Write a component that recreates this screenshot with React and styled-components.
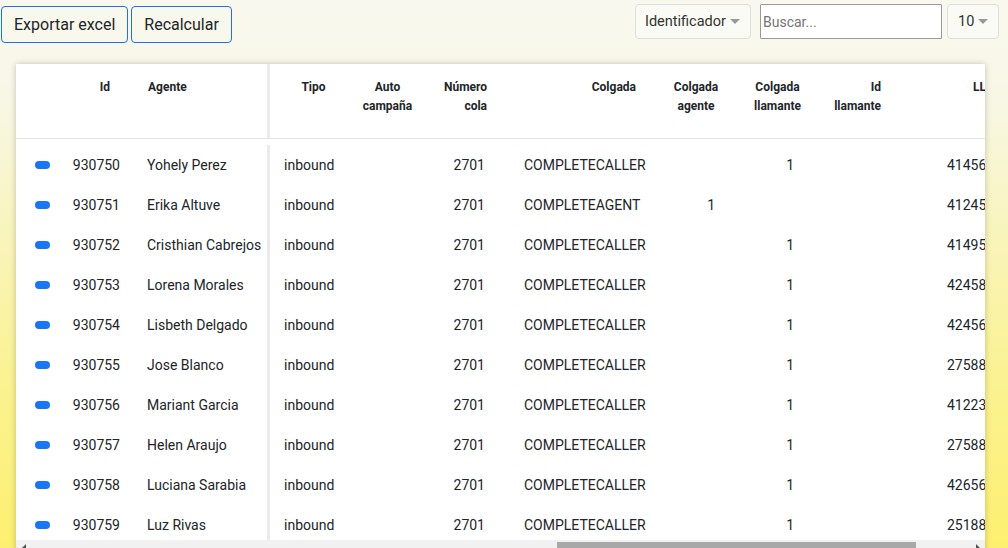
import React from "react";
import styled, { createGlobalStyle } from "styled-components";

const GlobalStyle = createGlobalStyle`
  html, body {
    margin: 0;
    height: 548px;
    overflow: hidden;
  }
  body {
    font-family: Roboto, "Liberation Sans", sans-serif;
    color: #212529;
    background: linear-gradient(
      180deg,
      #f8f8ef 0%,
      #f8f7e6 18%,
      #f9f4b8 45%,
      #fbf291 70%,
      #fdf070 100%
    );
  }
`;

const Page = styled.div`
  display: flex;
  flex-direction: column;
  height: 548px;
`;

const Toolbar = styled.div`
  height: 64px;
  flex-shrink: 0;
  display: flex;
  justify-content: space-between;
  align-items: flex-start;
  padding: 0 9px 0 1px;
  box-sizing: border-box;
`;

const Group = styled.div`
  display: flex;
  align-items: center;
  gap: ${({ $gap }) => $gap}px;
  padding-top: ${({ $top }) => $top}px;
`;

const OutlineButton = styled.button`
  height: 37px;
  padding: 0 12px;
  border: 1px solid #1a73e8;
  border-radius: 4px;
  background: transparent;
  font-family: Roboto, "Liberation Sans", sans-serif;
  font-size: 16px;
  color: #212529;
`;

const Select = styled.div`
  height: 35px;
  box-sizing: border-box;
  width: ${({ $w }) => $w}px;
  padding: 0 10px 0 ${({ $pl }) => $pl}px;
  display: flex;
  align-items: center;
  justify-content: space-between;
  border: 1px solid #dedede;
  border-radius: 4px;
  background: #fbfbf6;
  font-size: 14.5px;
  color: #333;
`;

const Caret = styled.span`
  width: 0;
  height: 0;
  border-left: 5px solid transparent;
  border-right: 5px solid transparent;
  border-top: 5px solid #999;
`;

const Search = styled.input`
  width: 182px;
  height: 35px;
  box-sizing: border-box;
  margin: 0 5px 0 9px;
  border: 1px solid #9a9a9a;
  border-radius: 1px;
  padding: 0 2px;
  font-family: Roboto, "Liberation Sans", sans-serif;
  font-size: 14px;
  background: #fff;
  &::placeholder {
    color: #757575;
  }
`;

const Card = styled.div`
  height: 491px;
  margin: 0 23px 0 16px;
  background: #fff;
  box-shadow: 0 0 6px rgba(0, 0, 0, 0.22);
  display: flex;
  flex-direction: column;
  overflow: hidden;
  flex-shrink: 0;
`;

const TableArea = styled.div`
  flex: 1;
  overflow: hidden;
`;

const colWidths = [46, 73, 135, 80, 75, 75, 150, 90, 75, 80, 200];
const gridCols = colWidths.map((w) => `${w}px`).join(" ");

const HeadRow = styled.div`
  display: grid;
  grid-template-columns: ${gridCols};
  height: 74px;
  border-bottom: 1px solid #e2e2e2;
  width: max-content;
`;

const Body = styled.div`
  padding-top: 6px;
  width: max-content;
`;

const Row = styled.div`
  display: grid;
  grid-template-columns: ${gridCols};
  height: 40px;
  align-items: center;
`;

const HeadCell = styled.div`
  box-sizing: border-box;
  height: 100%;
  padding: 14px ${({ $pr }) => $pr ?? 12}px 0 ${({ $pl }) => $pl ?? 12}px;
  text-align: ${({ $align }) => $align || "left"};
  font-size: 12px;
  font-weight: 700;
  line-height: 19px;
  color: #212529;
  white-space: nowrap;
  overflow: hidden;
  ${({ $divider }) => $divider && "border-right: 3px solid #ebebeb;"}
`;

const Cell = styled.div`
  box-sizing: border-box;
  height: 100%;
  display: flex;
  align-items: center;
  justify-content: ${({ $align }) =>
    $align === "right" ? "flex-end" : "flex-start"};
  padding: 0 ${({ $pr }) => $pr ?? 12}px 0 ${({ $pl }) => $pl ?? 12}px;
  font-size: 14px;
  color: #212529;
  white-space: nowrap;
  overflow: hidden;
  ${({ $divider }) => $divider && "border-right: 3px solid #ebebeb;"}
`;

const Pill = styled.span`
  width: 18px;
  height: 8px;
  border-radius: 4px;
  background: #1877f2;
`;

const ScrollBar = styled.div`
  height: 15px;
  flex-shrink: 0;
  display: flex;
  background: #f1f1f1;
`;

const Arrow = styled.div`
  width: 15px;
  display: flex;
  align-items: center;
  justify-content: center;
  &::after {
    content: "";
    border-top: 4px solid transparent;
    border-bottom: 4px solid transparent;
    ${({ $dir }) =>
      $dir === "left"
        ? "border-right: 4px solid #505050;"
        : "border-left: 4px solid #505050;"}
  }
`;

const Track = styled.div`
  flex: 1;
  padding: 2px 0;
  box-sizing: border-box;
`;

const Thumb = styled.div`
  height: 100%;
  background: #a8a8a8;
`;

const rows = [
  ["930750", "Yohely Perez", "COMPLETECALLER", "", "1", "4145623871"],
  ["930751", "Erika Altuve", "COMPLETEAGENT", "1", "", "4124530912"],
  ["930752", "Cristhian Cabrejos", "COMPLETECALLER", "", "1", "4149527730"],
  ["930753", "Lorena Morales", "COMPLETECALLER", "", "1", "4245811920"],
  ["930754", "Lisbeth Delgado", "COMPLETECALLER", "", "1", "4245639021"],
  ["930755", "Jose Blanco", "COMPLETECALLER", "", "1", "2758841102"],
  ["930756", "Mariant Garcia", "COMPLETECALLER", "", "1", "4122390158"],
  ["930757", "Helen Araujo", "COMPLETECALLER", "", "1", "2758821437"],
  ["930758", "Luciana Sarabia", "COMPLETECALLER", "", "1", "4265670214"],
  ["930759", "Luz Rivas", "COMPLETECALLER", "", "1", "2518839920"],
];

const App = () => {
  return (
    <Page>
      <GlobalStyle />
      <Toolbar>
        <Group $gap={3} $top={6}>
          <OutlineButton>Exportar excel</OutlineButton>
          <OutlineButton>Recalcular</OutlineButton>
        </Group>
        <Group $gap={0} $top={4}>
          <Select $w={116} $pl={9}>
            Identificador
            <Caret />
          </Select>
          <Search placeholder="Buscar..." />
          <Select $w={52} $pl={10}>
            10
            <Caret />
          </Select>
        </Group>
      </Toolbar>
      <Card>
        <TableArea>
          <HeadRow>
            <HeadCell />
            <HeadCell $align="right" $pr={25}>Id</HeadCell>
            <HeadCell $pl={13} $divider>Agente</HeadCell>
            <HeadCell $align="center" $pl={10} $pr={3}>Tipo</HeadCell>
            <HeadCell $align="center" $pl={0} $pr={0}>
              Auto
              <br />
              campaña
            </HeadCell>
            <HeadCell $align="right" $pr={13}>
              Número
              <br />
              cola
            </HeadCell>
            <HeadCell $align="right" $pr={14}>Colgada</HeadCell>
            <HeadCell $align="center" $pl={2} $pr={0}>
              Colgada
              <br />
              agente
            </HeadCell>
            <HeadCell $align="center" $pl={0} $pr={0}>
              Colgada
              <br />
              llamante
            </HeadCell>
            <HeadCell $align="right" $pr={14}>
              Id
              <br />
              llamante
            </HeadCell>
            <HeadCell $pl={78}>LLamada</HeadCell>
          </HeadRow>
          <Body>
            {rows.map((r) => (
              <Row key={r[0]}>
                <Cell $pl={19}>
                  <Pill />
                </Cell>
                <Cell $align="right" $pr={15}>{r[0]}</Cell>
                <Cell $divider>{r[1]}</Cell>
                <Cell $pl={14}>inbound</Cell>
                <Cell />
                <Cell $align="right" $pr={15}>2701</Cell>
                <Cell $pl={24}>{r[2]}</Cell>
                <Cell $align="right" $pr={25}>{r[3]}</Cell>
                <Cell $align="right" $pr={21}>{r[4]}</Cell>
                <Cell />
                <Cell $pl={52}>{r[5]}</Cell>
              </Row>
            ))}
          </Body>
        </TableArea>
        <ScrollBar>
          <Arrow $dir="left" />
          <Track>
            <Thumb style={{ marginLeft: 526, width: 359 }} />
          </Track>
          <Arrow $dir="right" />
        </ScrollBar>
      </Card>
    </Page>
  );
};

export default App;
